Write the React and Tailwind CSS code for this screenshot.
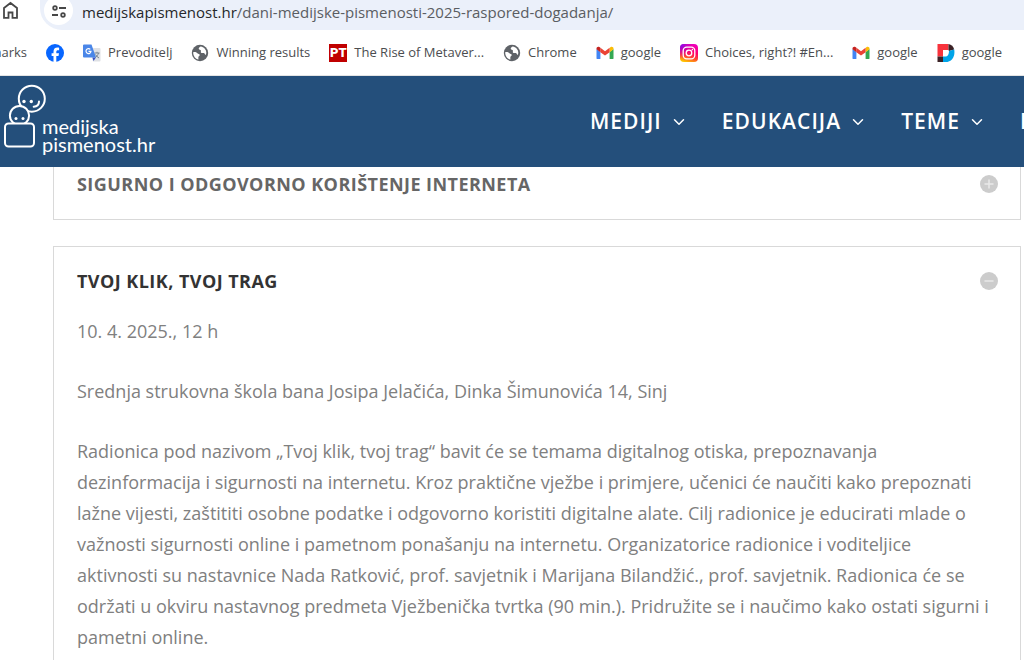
import { ChevronDown } from 'lucide-react';

const bookmarks = [
  { icon: 'facebook', label: '' },
  { icon: 'translate', label: 'Prevoditelj' },
  { icon: 'globe', label: 'Winning results' },
  { icon: 'pt', label: 'The Rise of Metaver...' },
  { icon: 'globe', label: 'Chrome' },
  { icon: 'gmail', label: 'google' },
  { icon: 'instagram', label: 'Choices, right?! #En...' },
  { icon: 'gmail', label: 'google' },
  { icon: 'd', label: 'google' },
];

const menu = ['MEDIJI', 'EDUKACIJA', 'TEME'];

function BookmarkIcon({ name }) {
  const size = 'w-[18px] h-[18px] shrink-0';
  if (name === 'facebook') {
    return (
      <svg viewBox="0 0 18 18" className={size}>
        <circle cx="9" cy="9" r="9" fill="#0866ff" />
        <path d="M7.500 18v-6.100H5.600V9.200h1.900V8c0-3 1.300-4.400 4.100-4.400.5 0 1.100.1 1.500.2v2.400H12c-1.200 0-1.700.5-1.700 1.800v1.200H13l-.5 2.700h-2.200V18z" fill="#fff" />
      </svg>
    );
  }
  if (name === 'translate') {
    return (
      <svg viewBox="0 0 18 18" className={size}>
        <path d="M6 4h10.500a1 1 0 0 1 1 1v11.500a1 1 0 0 1-1 1H10z" fill="#dfe1e5" />
        <path d="M9.500 13.500h3.500l-2.500 3.500z" fill="#3a50c0" />
        <path d="M11.500 9h5M14 7.800V9M15.500 9c-.5 2-2 3.800-3.500 4.800M12.500 10.500c.8 1.500 2 2.700 3.500 3.500" stroke="#7b8794" strokeWidth="1" fill="none" />
        <path d="M1 .5h7.500l4.500 13H1a1 1 0 0 1-1-1v-11a1 1 0 0 1 1-1z" fill="#4a86e8" />
        <path d="M7.300 5.300A2.500 2.500 0 1 0 8 7.300H5.500" stroke="#fff" strokeWidth="1.200" fill="none" />
      </svg>
    );
  }
  if (name === 'globe') {
    return (
      <svg viewBox="0 0 18 18" className={size}>
        <circle cx="9" cy="9" r="8.200" fill="#5f6368" />
        <path d="M2.200 8.200c1.800-.4 3.300.2 4.200 1 .8.800 2.300.4 2.300 1.700 0 1.100-1.200 1.100-1.300 2.200-.1 1-.1 1.700.1 2.500C4.500 15 2.100 12 2.200 8.200z" fill="#fff" />
        <path d="M9.700 2.400C8.300 3 7.500 4 7.800 5c.3.9 1.700.7 2.100 1.600.3.800-.5 1.500.2 2.200.9.700 1.900-.2 2.900.3.900.5.700 1.600 1.700 1.900.4-.7.700-1.500.6-2.500-.1-3.200-2.500-5.600-5.600-6.100z" fill="#fff" />
      </svg>
    );
  }
  if (name === 'pt') {
    return (
      <span className="w-[18px] h-[18px] shrink-0 bg-[#c00000] text-white font-black text-[13px] leading-[18px] text-center font-['Roboto',sans-serif]">
        PT
      </span>
    );
  }
  if (name === 'gmail') {
    return (
      <svg viewBox="0 0 18 18" className={size}>
        <path d="M.5 5v9.200c0 .5.400.9.900.9h3V8z" fill="#4285f4" />
        <path d="M13.600 8v7.100h3c.5 0 .9-.4.9-.9V5z" fill="#34a853" />
        <path d="M13.600 4v4.200l3.900-2.900V4.500c0-1.500-1.700-2.300-2.900-1.400z" fill="#fbbc04" />
        <path d="M4.400 8.200V3.800L9 7.200l4.600-3.400v4.400L9 11.600z" fill="#ea4335" />
        <path d="M.5 4.500v.8l3.900 2.900V3.800l-1-.7C2.200 2.200.5 3 .5 4.500z" fill="#c5221f" />
      </svg>
    );
  }
  if (name === 'instagram') {
    return (
      <svg viewBox="0 0 18 18" className={size}>
        <defs>
          <linearGradient id="ig" x1="0.300" y1="1" x2="0.600" y2="0">
            <stop offset="0" stopColor="#ffc800" />
            <stop offset="0.300" stopColor="#ff4a2f" />
            <stop offset="0.600" stopColor="#ff0069" />
            <stop offset="1" stopColor="#f000b8" />
          </linearGradient>
          <radialGradient id="igViolet" cx="0" cy="0" r="0.800">
            <stop offset="0" stopColor="#6a0bff" />
            <stop offset="1" stopColor="#d300c5" stopOpacity="0" />
          </radialGradient>
        </defs>
        <rect width="18" height="18" rx="4" fill="url(#ig)" />
        <rect width="18" height="18" rx="4" fill="url(#igViolet)" />
        <rect x="3.200" y="3.200" width="11.600" height="11.600" rx="3.500" fill="none" stroke="#fff" strokeWidth="1.300" />
        <circle cx="9" cy="9" r="2.800" fill="none" stroke="#fff" strokeWidth="1.300" />
        <circle cx="12.400" cy="5.600" r=".8" fill="#fff" />
      </svg>
    );
  }
  return (
    <svg viewBox="0 0 18 18" className={size}>
      <path d="M.5 0h11v6H6v6.500H.5z" fill="#f8333c" />
      <path d="M11.500 0c3 .5 5 2.500 5.700 5.500L12 7l-.5-1z" fill="#3b2226" />
      <path d="M17.200 5.500C18.400 12 15.200 18 8.500 18H6v-5.500h2.500c2.300 0 3.500-2 3.500-5.500z" fill="#00a4e8" />
      <path d="M.5 12.500H6V18H.5z" fill="#3b2226" />
    </svg>
  );
}

function AddressBar() {
  return (
    <div className="flex h-[30px] items-start bg-white">
      <button aria-label="Home" className="flex w-10 shrink-0">
        <svg viewBox="0 0 20 20" className="w-5 h-5" fill="none" stroke="#474747" strokeWidth="1.800">
          <path d="M4 8l6.500-5L17 8v9.800h-4.500v-5.300h-4v5.300H4z" />
        </svg>
      </button>
      <div className="flex h-full flex-1 items-start rounded-bl-[22px] bg-[#ebf0fa]">
        <button aria-label="Site information" className="-mt-1 ml-1 flex h-[29px] w-[29px] shrink-0 items-center justify-center rounded-full bg-white">
          <svg viewBox="0 0 16 16" className="w-4 h-4" fill="none" stroke="#474747" strokeWidth="1.800">
            <circle cx="4" cy="5" r="1.800" />
            <path d="M8 5h7M1 12h6" />
            <circle cx="12" cy="12" r="1.800" />
          </svg>
        </button>
        <a href="#" className="ml-[9px] whitespace-nowrap text-[15px] leading-6 text-[#5a5d62]">
          <span className="text-[#26282b]">medijskapismenost.hr</span>/dani-medijske-pismenosti-2025-raspored-dogadanja/
        </a>
      </div>
    </div>
  );
}

function BookmarksBar() {
  return (
    <nav className="flex h-[46px] items-center gap-[19px] overflow-hidden border-b border-[#e4e4e4] bg-white text-[13px] text-[#4b4d50]">
      <a href="#" className="flex w-[27px] shrink-0 justify-end overflow-hidden">marks</a>
      {bookmarks.map((item, i) => (
        <a key={i} href="#" aria-label={item.label || 'Facebook'} className="flex shrink-0 items-center gap-[7px] whitespace-nowrap">
          <BookmarkIcon name={item.icon} />
          {item.label && <span>{item.label}</span>}
        </a>
      ))}
    </nav>
  );
}

function Header() {
  return (
    <header className="flex h-[91px] items-center justify-between bg-[#244f7b] text-white">
      <a href="#" className="flex h-full shrink-0 pl-[3px]">
        <svg viewBox="0 0 46 80" className="w-[46px] h-20" fill="#244f7b" stroke="#fff" strokeWidth="2">
          <circle cx="28.800" cy="22.700" r="13" />
          <circle cx="16.500" cy="39.500" r="9.600" />
          <rect x="2" y="47.500" width="29" height="23" rx="3.500" />
          <path d="M36 25.500c0 3-2 5-5.300 5.200" strokeLinecap="round" />
          <g fill="#fff" stroke="none">
            <circle cx="21" cy="25.500" r="1.700" />
            <circle cx="28.300" cy="25.500" r="1.700" />
            <circle cx="13" cy="42.500" r="1.500" />
            <circle cx="20" cy="42.500" r="1.500" />
          </g>
        </svg>
        <span className="-ml-[7px] pt-[41px] font-['Lato',sans-serif] text-[20px] leading-[18px]">
          medijska
          <br />
          pismenost.hr
        </span>
      </a>
      <nav className="flex shrink-0 gap-[34px] text-[21px] font-semibold tracking-wider">
        {menu.map((item) => (
          <a key={item} href="#" className="flex items-center gap-2">
            {item}
            <ChevronDown className="w-[18px] h-[18px]" strokeWidth={2} />
          </a>
        ))}
        <a href="#" className="w-1 overflow-hidden">I</a>
      </nav>
    </header>
  );
}

function ToggleIcon({ open }) {
  return (
    <svg viewBox="0 0 18 18" className="w-[18px] h-[18px]">
      <circle cx="9" cy="9" r="9" fill="#cccccc" />
      <path d={open ? 'M4.500 9h9' : 'M4.500 9h9M9 4.500v9'} stroke="#e9e9e9" strokeWidth="1.500" />
    </svg>
  );
}

export default function App() {
  return (
    <div className="h-screen overflow-hidden bg-white font-['Open_Sans',sans-serif]">
      <AddressBar />
      <BookmarksBar />
      <Header />
      <main className="ml-[53px] mr-[3px] flex flex-col gap-[26px]">
        <section className="border border-t-0 border-[#d9d9d9] pl-[23px] pr-[22px] pt-[3px] pb-[21px]">
          <button className="flex w-full items-center justify-between text-left text-[18px] font-bold leading-7 tracking-wide text-[#666666]">
            SIGURNO I ODGOVORNO KORIŠTENJE INTERNETA
            <ToggleIcon />
          </button>
        </section>
        <section className="border border-[#d9d9d9] pl-[23px] pr-[22px] pt-5 pb-6">
          <button className="flex w-full items-center justify-between text-left text-[18px] font-bold leading-7 tracking-wide text-[#333333]">
            TVOJ KLIK, TVOJ TRAG
            <ToggleIcon open />
          </button>
          <div className="flex flex-col gap-[29px] pt-[21px] pr-[6px] text-[18px] leading-[31px] text-[#808080]">
            <p>10. 4. 2025., 12 h</p>
            <p>Srednja strukovna škola bana Josipa Jelačića, Dinka Šimunovića 14, Sinj</p>
            <p>
              Radionica pod nazivom „Tvoj klik, tvoj trag“ bavit će se temama digitalnog otiska, prepoznavanja
              dezinformacija i sigurnosti na internetu. Kroz praktične vježbe i primjere, učenici će naučiti kako
              prepoznati lažne vijesti, zaštititi osobne podatke i odgovorno koristiti digitalne alate. Cilj radionice je
              educirati mlade o važnosti sigurnosti online i pametnom ponašanju na internetu. Organizatorice radionice i
              voditeljice aktivnosti su nastavnice Nada Ratković, prof. savjetnik i Marijana Bilandžić., prof. savjetnik.
              Radionica će se održati u okviru nastavnog predmeta Vježbenička tvrtka (90 min.). Pridružite se i naučimo
              kako ostati sigurni i pametni online.
            </p>
          </div>
        </section>
      </main>
    </div>
  );
}
